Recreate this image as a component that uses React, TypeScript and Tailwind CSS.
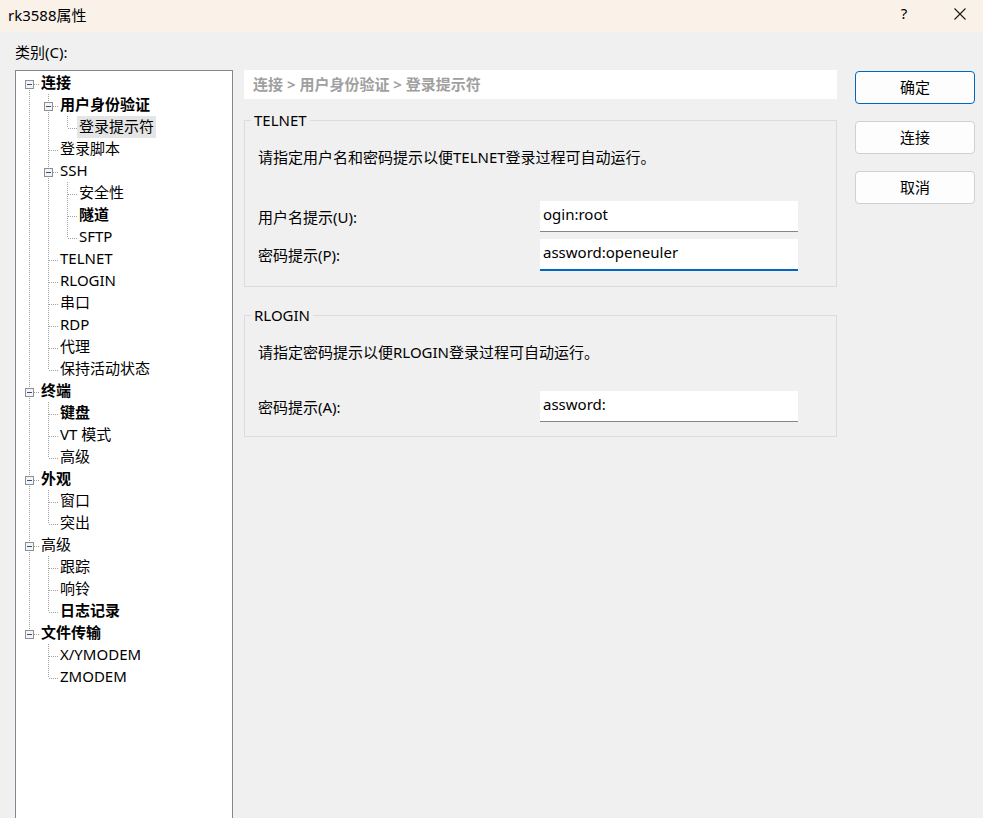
import React from 'react';

interface TreeItem {
    t: string;
    l: number;
    b?: boolean;
    c?: boolean;
    sel?: boolean;
}

const items: TreeItem[] = [
    { t: '连接', l: 0, b: true, c: true },
    { t: '用户身份验证', l: 1, b: true, c: true },
    { t: '登录提示符', l: 2, sel: true },
    { t: '登录脚本', l: 1 },
    { t: 'SSH', l: 1, c: true },
    { t: '安全性', l: 2 },
    { t: '隧道', l: 2, b: true },
    { t: 'SFTP', l: 2 },
    { t: 'TELNET', l: 1 },
    { t: 'RLOGIN', l: 1 },
    { t: '串口', l: 1 },
    { t: 'RDP', l: 1 },
    { t: '代理', l: 1 },
    { t: '保持活动状态', l: 1 },
    { t: '终端', l: 0, b: true, c: true },
    { t: '键盘', l: 1, b: true },
    { t: 'VT 模式', l: 1 },
    { t: '高级', l: 1 },
    { t: '外观', l: 0, b: true, c: true },
    { t: '窗口', l: 1 },
    { t: '突出', l: 1 },
    { t: '高级', l: 0, c: true },
    { t: '跟踪', l: 1 },
    { t: '响铃', l: 1 },
    { t: '日志记录', l: 1, b: true },
    { t: '文件传输', l: 0, b: true, c: true },
    { t: 'X/YMODEM', l: 1 },
    { t: 'ZMODEM', l: 1 },
];

// does the branch at depth d carry on below row i
const continues = (i: number, d: number) => {
    for (let j = i + 1; j < items.length; j++) {
        if (items[j].l <= d) return items[j].l === d;
    }
    return false;
};

const DOT = '#a0a0a0';

const Guide: React.FC<{ i: number; d: number; own: boolean; expander?: boolean }> = ({ i, d, own, expander }) => {
    const down = continues(i, d);
    return (
        <svg width="19" height="22" className="shrink-0">
            {!own && down && (
                <line x1="9.5" y1="0" x2="9.5" y2="22" stroke={DOT} strokeDasharray="1 1" />
            )}
            {own && (
                <>
                    {i !== 0 && <line x1="9.5" y1="0" x2="9.5" y2="12" stroke={DOT} strokeDasharray="1 1" />}
                    {down && <line x1="9.5" y1="12" x2="9.5" y2="22" stroke={DOT} strokeDasharray="1 1" />}
                    <line x1="10" y1="12.5" x2="19" y2="12.5" stroke={DOT} strokeDasharray="1 1" />
                    {expander && (
                        <>
                            <rect x="5.5" y="8.5" width="8" height="8" fill="#f4f4f4" stroke="#8f8f8f" />
                            <line x1="7" y1="12.5" x2="12" y2="12.5" stroke="#2f4f9c" />
                        </>
                    )}
                </>
            )}
        </svg>
    );
};

const TreeRow: React.FC<{ item: TreeItem; i: number }> = ({ item, i }) => {
    const cols = [];
    for (let d = 0; d <= item.l; d++) {
        cols.push(<Guide key={d} i={i} d={d} own={d === item.l} expander={item.c} />);
    }
    return (
        <div className="flex h-[22px]">
            {cols}
            <span
                className={`h-[22px] px-[2px] leading-[21px] whitespace-nowrap ${item.b ? 'font-bold' : ''} ${item.sel ? 'bg-[#e5e5e5]' : ''}`}
            >
                {item.t}
            </span>
        </div>
    );
};

const Field: React.FC<{ label: string; value: string; focused?: boolean; className?: string }> = ({ label, value, focused, className }) => (
    <div className={`flex items-center ${className ?? ''}`}>
        <div className="w-[282px] leading-[20px]">{label}</div>
        <div
            className={`w-[258px] bg-white px-[3px] pb-[5px] flex items-center leading-[20px] ${focused ? 'h-[32px] border-b-2 border-[#0067c0]' : 'h-[31px] border-b border-[#868686]'}`}
        >
            {value}
        </div>
    </div>
);

const App: React.FC = () => {
    return (
        <div className="w-[983px] h-[818px] overflow-hidden bg-[#f0f0f0] text-[15px] text-black font-['Noto_Sans','Noto_Sans_CJK_SC',sans-serif]">

            {/* Title bar */}
            <div className="h-[32px] bg-[#faf1e9] flex items-center">
                <span className="pl-[8px] leading-[20px] pb-[2px]">rk3588属性</span>
                <div className="ml-auto flex h-full">
                    <div className="w-[46px] flex items-center justify-center pb-[6px]">?</div>
                    <div className="w-[46px] ml-[10px] flex items-center justify-center pb-[5px]">
                        <svg width="12" height="12" viewBox="0 0 12 12">
                            <path d="M0.5 0.5 L11.5 11.5 M11.5 0.5 L0.5 11.5" stroke="#1a1a1a" strokeWidth="1.1" />
                        </svg>
                    </div>
                </div>
            </div>

            <div className="flex pt-[10px]">

                {/* Category tree */}
                <div className="ml-[15px] w-[218px] shrink-0">
                    <div className="h-[20px] leading-[20px] mb-[8px]">类别(C):</div>
                    <div className="h-[760px] bg-white border border-[#828790] pt-[1px] pl-[4px]">
                        {items.map((it, i) => (
                            <TreeRow key={i} item={it} i={i} />
                        ))}
                    </div>
                </div>

                {/* Page */}
                <div className="ml-[11px] w-[593px] shrink-0 mt-[28px]">
                    <div className="h-[29px] bg-white flex items-center pl-[9px] font-bold text-[#a0a0a0] whitespace-nowrap">
                        连接 &gt; 用户身份验证 &gt; 登录提示符
                    </div>

                    <div className="relative mt-[21px] border border-[#dcdcdc] pt-[26px] pb-[15px] pl-[13px]">
                        <span className="absolute -top-[11px] left-[6px] px-[3px] bg-[#f0f0f0] leading-[20px]">TELNET</span>
                        <div className="h-[20px] leading-[20px] whitespace-nowrap">请指定用户名和密码提示以便TELNET登录过程可自动运行。</div>
                        <Field className="mt-[34px]" label="用户名提示(U):" value="ogin:root" />
                        <Field className="mt-[7px]" label="密码提示(P):" value="assword:openeuler" focused />
                    </div>

                    <div className="relative mt-[28px] border border-[#dcdcdc] pt-[26px] pb-[14px] pl-[13px]">
                        <span className="absolute -top-[11px] left-[6px] px-[3px] bg-[#f0f0f0] leading-[20px]">RLOGIN</span>
                        <div className="h-[20px] leading-[20px] whitespace-nowrap">请指定密码提示以便RLOGIN登录过程可自动运行。</div>
                        <Field className="mt-[29px]" label="密码提示(A):" value="assword:" />
                    </div>
                </div>

                {/* Buttons */}
                <div className="ml-[18px] mt-[29px] w-[120px] shrink-0 flex flex-col gap-[17px]">
                    <button className="h-[33px] rounded-[4px] border border-[#0067c0] bg-[#fdfdfd]">确定</button>
                    <button className="h-[33px] rounded-[4px] border border-[#d0d0d0] bg-[#fdfdfd]">连接</button>
                    <button className="h-[33px] rounded-[4px] border border-[#d0d0d0] bg-[#fdfdfd]">取消</button>
                </div>
            </div>
        </div>
    );
};

export default App;
